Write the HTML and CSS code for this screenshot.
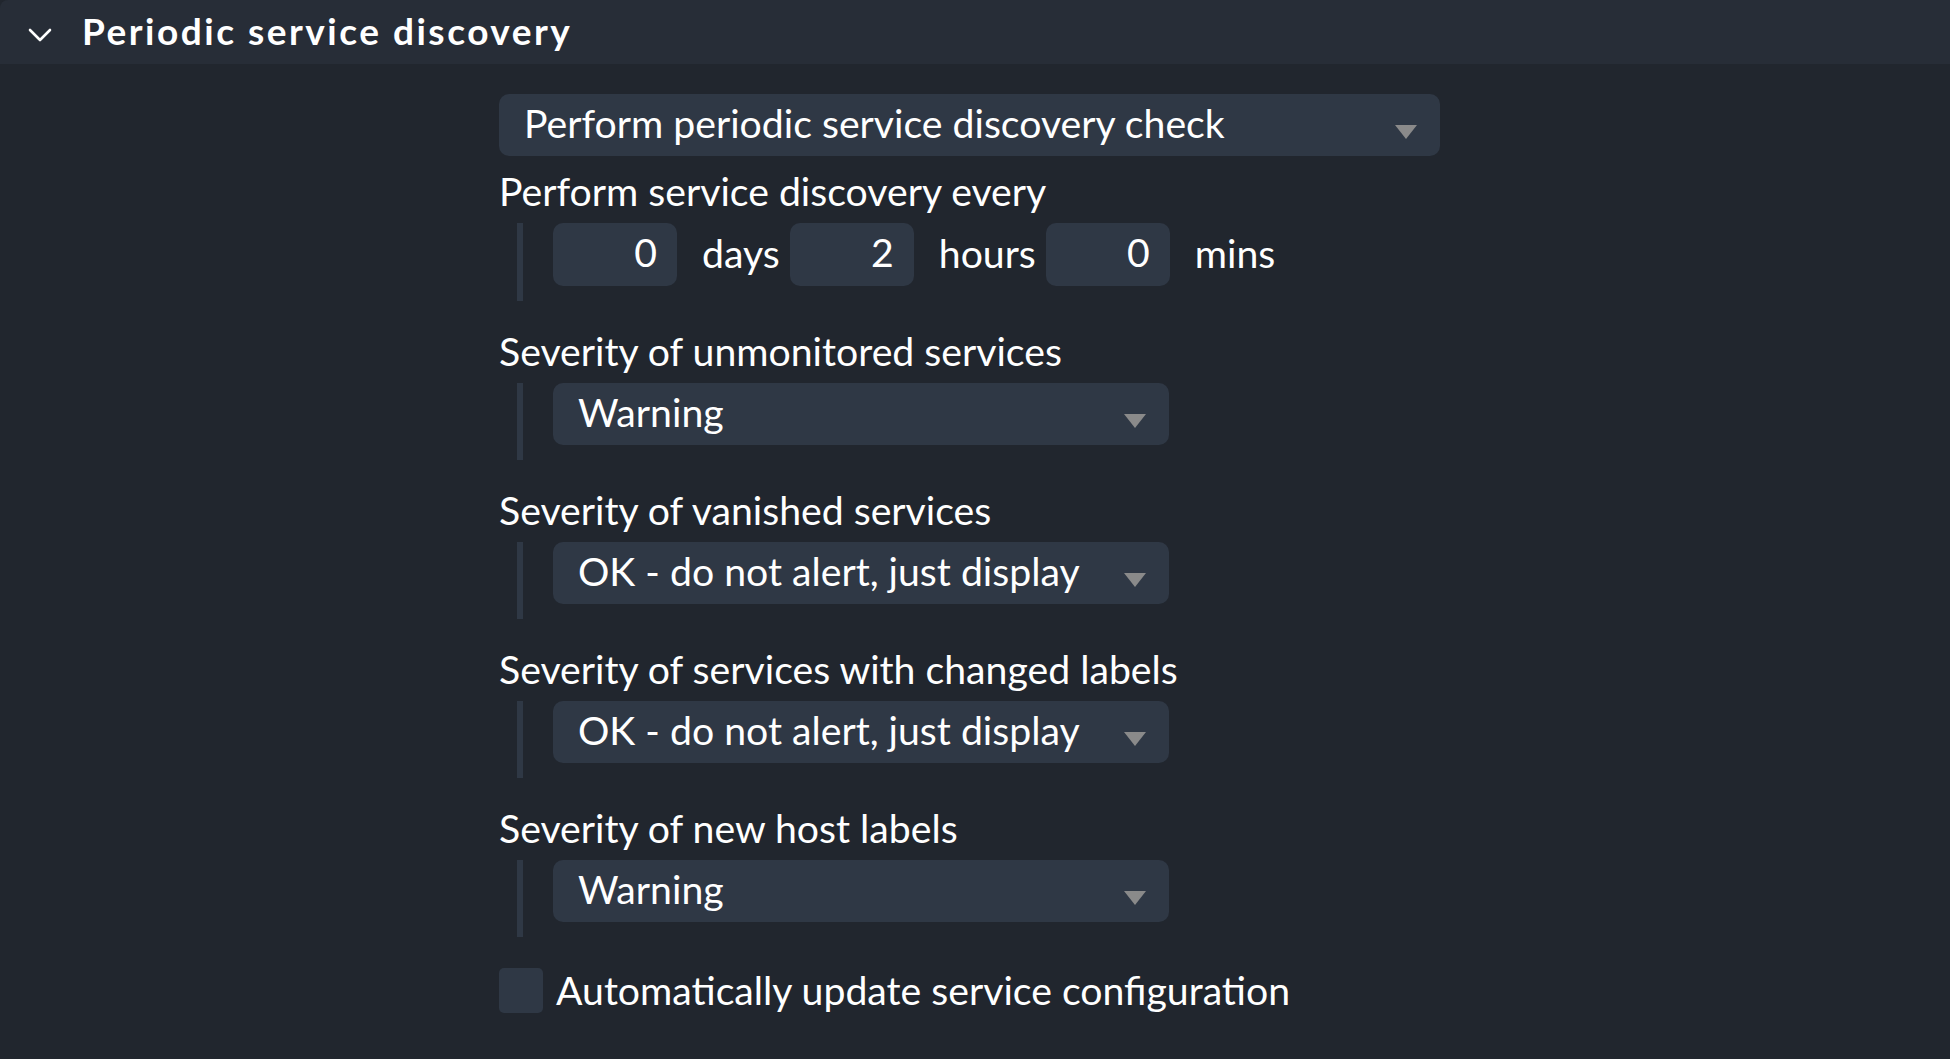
FILE: index.html
```html
<!DOCTYPE html>
<html>
<head>
<meta charset="utf-8">
<link rel="stylesheet" href="styles.css">
</head>
<body>
<div class="panel">
  <div class="header">
    <svg class="chevron" width="24" height="14" viewBox="0 0 24 14"><path d="M2 2 L12 12 L22 2" fill="none" stroke="#ffffff" stroke-width="2.6" stroke-linecap="round" stroke-linejoin="round"/></svg>
    <span class="title">Periodic service discovery</span>
  </div>
  <div class="content">
    <div class="select wide"><span>Perform periodic service discovery check</span><i class="arrow"></i></div>
    <div class="label first">Perform service discovery every</div>
    <div class="nested">
      <div class="timerow">
        <div class="num">0</div><span class="unit">days</span>
        <div class="num">2</div><span class="unit">hours</span>
        <div class="num">0</div><span class="unit">mins</span>
      </div>
    </div>
    <div class="label">Severity of unmonitored services</div>
    <div class="nested"><div class="select"><span>Warning</span><i class="arrow"></i></div></div>
    <div class="label">Severity of vanished services</div>
    <div class="nested"><div class="select"><span>OK - do not alert, just display</span><i class="arrow"></i></div></div>
    <div class="label">Severity of services with changed labels</div>
    <div class="nested"><div class="select"><span>OK - do not alert, just display</span><i class="arrow"></i></div></div>
    <div class="label">Severity of new host labels</div>
    <div class="nested"><div class="select"><span>Warning</span><i class="arrow"></i></div></div>
    <div class="checkrow"><span class="box"></span><span class="checklabel">Automatically update service configuration</span></div>
  </div>
</div>
</body>
</html>
```
FILE: styles.css
```css
html, body {
  margin: 0;
  padding: 0;
  background: #21262e;
}
body {
  font-family: Lato, "Open Sans", sans-serif;
  color: #ffffff;
  width: 1950px;
  height: 1059px;
  overflow: hidden;
}
.panel {
  background: #21262e;
  height: 1059px;
}
.header {
  height: 64px;
  background: #272d37;
  border-top-left-radius: 8px;
  display: flex;
  align-items: center;
  box-sizing: border-box;
  padding-left: 28px;
}
.chevron {
  margin-top: 6px;
  flex: none;
}
.title {
  margin-left: 30px;
  font-weight: bold;
  font-size: 37px;
  letter-spacing: 2.5px;
  margin-top: -4px;
}
.content {
  padding-left: 499px;
  padding-top: 30px;
  font-size: 39.2px;
}
.select {
  width: 616px;
  height: 62px;
  background: #2f3845;
  border-radius: 10px;
  display: flex;
  align-items: center;
  box-sizing: border-box;
  padding-left: 25px;
  padding-right: 20px;
  position: relative;
}
.select.wide {
  width: 941px;
}
.select span {
  flex: 1;
  margin-top: -5px;
}
.arrow {
  width: 0;
  height: 0;
  border-left: 11px solid transparent;
  border-right: 11px solid transparent;
  border-top: 14px solid #8a8a8a;
  margin-top: 13px;
  margin-right: 3px;
}
.label {
  height: 40px;
  line-height: 40px;
  margin-top: 30px;
}
.label.first {
  margin-top: 15px;
}
.nested {
  margin-top: 12px;
  margin-left: 18px;
  border-left: 6px solid #2f3845;
  padding-left: 30px;
  padding-bottom: 15px;
}
.timerow {
  display: flex;
  align-items: center;
}
.num {
  width: 124px;
  height: 63px;
  background: #2f3845;
  border-radius: 10px;
  box-sizing: border-box;
  padding-right: 20px;
  text-align: right;
  line-height: 58px;
}
.unit {
  margin-left: 25px;
  margin-right: 10px;
  margin-top: -5px;
}
.checkrow {
  margin-top: 31px;
  display: flex;
  align-items: center;
}
.box {
  width: 44px;
  height: 45px;
  background: #2f3845;
  border-radius: 5px;
  flex: none;
}
.checklabel {
  margin-left: 13px;
  margin-top: -2px;
}
```
